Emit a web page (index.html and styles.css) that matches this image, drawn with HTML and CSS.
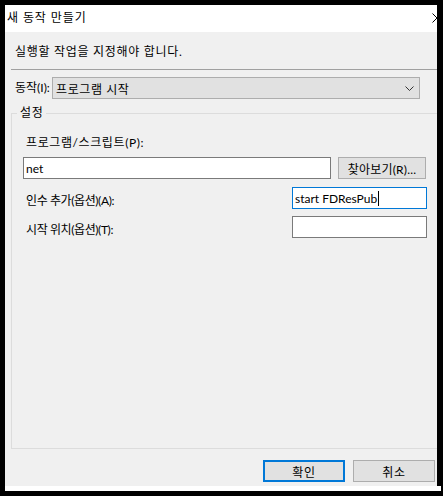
FILE: index.html
```html
<!DOCTYPE html>
<html lang="ko">
<head>
<meta charset="utf-8">
<title>새 동작 만들기</title>
<link rel="stylesheet" href="styles.css">
</head>
<body>
<div class="window">
  <div class="titlebar">
    <span class="title">새 동작 만들기</span>
    <svg class="close" width="10" height="10" viewBox="0 0 10 10"><path d="M0.5 0.5 L9.5 9.5 M9.5 0.5 L0.5 9.5" stroke="#000" stroke-width="1" fill="none"/></svg>
  </div>
  <div class="content">
    <div class="instruction">실행할 작업을 지정해야 합니다.</div>
    <div class="separator"></div>
    <div class="action-row">
      <span class="label">동작(I):</span>
      <div class="select">
        <span>프로그램 시작</span>
        <svg width="9" height="5" viewBox="0 0 9 5"><path d="M0.5 0.5 L4.5 4.5 L8.5 0.5" stroke="#333" stroke-width="1" fill="none"/></svg>
      </div>
    </div>
    <fieldset class="group">
      <legend>설정</legend>
      <div class="field-label">프로그램/스크립트(P):</div>
      <div class="program-row">
        <div class="input wide">net</div>
        <div class="button browse">찾아보기(R)...</div>
      </div>
      <div class="arg-row">
        <span class="arg-label">인수 추가(옵션)(A):</span>
        <div class="input small focused">start FDResPub<span class="caret"></span></div>
      </div>
      <div class="arg-row second">
        <span class="arg-label">시작 위치(옵션)(T):</span>
        <div class="input small"></div>
      </div>
    </fieldset>
    <div class="footer">
      <div class="button dlg default">확인</div>
      <div class="button dlg">취소</div>
    </div>
  </div>
  <div class="bottom-band"></div>
</div>
</body>
</html>
```

FILE: styles.css
```css
html, body {
  margin: 0;
  padding: 0;
}
body {
  background: #000;
  width: 443px;
  height: 496px;
  overflow: hidden;
  font-family: Lato, "Noto Sans CJK KR", "Noto Sans", sans-serif;
  font-size: 12px;
  letter-spacing: 0.6px;
  color: #000;
}
.window {
  margin: 5px 0 0 5px;
  width: 432px;
  height: 486px;
  display: flex;
  flex-direction: column;
}
.titlebar {
  height: 27px;
  flex: none;
  background: #fff;
  display: flex;
  align-items: center;
  justify-content: space-between;
  padding-left: 2px;
  overflow: hidden;
}
.title {
  line-height: 16px;
  margin-top: -2px;
  letter-spacing: 0.9px;
}
.close {
  margin-right: -5px;
  margin-top: -2px;
  flex: none;
}
.content {
  height: 454px;
  flex: none;
  background: #f0f0f0;
  overflow: hidden;
  display: flex;
  flex-direction: column;
  padding-top: 12px;
  box-sizing: border-box;
}
.instruction {
  line-height: 16px;
  padding-left: 10px;
  letter-spacing: 0.7px;
}
.separator {
  margin: 9px 0 0 6px;
  height: 1px;
  background: #a0a0a0;
}
.action-row {
  margin-top: 7px;
  height: 22px;
  display: flex;
  align-items: center;
}
.label {
  flex: none;
  width: 47px;
  padding-left: 10px;
  box-sizing: border-box;
  line-height: 16px;
  white-space: nowrap;
  letter-spacing: 0;
}
.select {
  flex: none;
  width: 368px;
  height: 22px;
  box-sizing: border-box;
  border: 1px solid #adadad;
  background: #e1e1e1;
  display: flex;
  align-items: center;
  justify-content: space-between;
  padding: 0 5px 0 3px;
}
.group {
  margin: 6px 0 0 6px;
  padding: 0;
  width: 440px;
  height: 344px;
  box-sizing: border-box;
  border: 1px solid #dcdcdc;
  min-width: 0;
}
.group legend {
  margin-left: 5px;
  padding: 0 3px;
  line-height: 16px;
}
.field-label {
  margin-top: 14px;
  padding-left: 14px;
  line-height: 16px;
}
.program-row {
  margin-top: 6px;
  padding-left: 11px;
  display: flex;
  gap: 7px;
}
.input {
  height: 22px;
  box-sizing: border-box;
  border: 1px solid #7a7a7a;
  background: #fff;
  padding-left: 2px;
  line-height: 19px;
  display: flex;
  align-items: center;
  letter-spacing: 0;
}
.input.wide {
  width: 308px;
}
.input.small {
  width: 135px;
}
.input.focused {
  border-color: #0078d7;
}
.caret {
  display: inline-block;
  width: 1px;
  height: 15px;
  background: #000;
  margin-left: 1px;
}
.button {
  height: 22px;
  box-sizing: border-box;
  border: 1px solid #adadad;
  background: #e1e1e1;
  display: flex;
  align-items: center;
  justify-content: center;
}
.browse {
  width: 88px;
  letter-spacing: 0.2px;
}
.arg-row {
  margin-top: 8px;
  display: flex;
  justify-content: space-between;
  align-items: flex-start;
  width: 415px;
}
.arg-row.second {
  margin-top: 7px;
}
.arg-label {
  padding-left: 14px;
  padding-top: 6px;
  line-height: 16px;
  letter-spacing: -0.4px;
}
.footer {
  margin-top: 11px;
  display: flex;
  justify-content: flex-end;
  gap: 8px;
  padding-right: 2px;
}
.dlg {
  width: 82px;
}
.dlg.default {
  border: 2px solid #0078d7;
}
.bottom-band {
  height: 5px;
  flex: none;
  background: #fff;
  margin-right: -4px;
}
```
